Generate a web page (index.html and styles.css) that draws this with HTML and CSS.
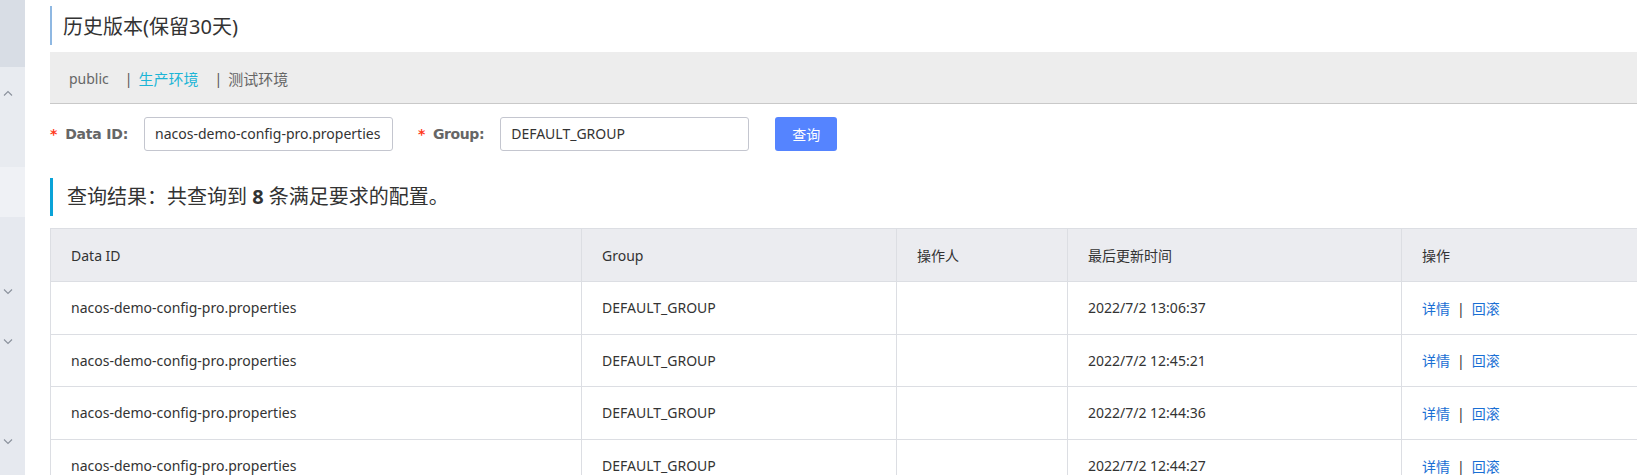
FILE: index.html
```html
<!DOCTYPE html>
<html lang="zh-CN">
<head>
<meta charset="utf-8">
<title>历史版本</title>
<link rel="stylesheet" href="styles.css">
</head>
<body>
<div class="layout">
  <aside class="sidebar">
    <div class="sb-top"></div>
    <div class="sb-group up">
      <svg class="chev" width="10" height="6" viewBox="0 0 10 6"><path d="M1 5.5 L5 1.5 L9 5.5" fill="none" stroke="#8a919c" stroke-width="1.1"/></svg>
    </div>
    <div class="sb-active"></div>
    <div class="sb-rest">
      <div class="sb-item first"><svg class="chev" width="10" height="6" viewBox="0 0 10 6"><path d="M1 0.5 L5 4.5 L9 0.5" fill="none" stroke="#8a919c" stroke-width="1.1"/></svg></div>
      <div class="sb-item second"><svg class="chev" width="10" height="6" viewBox="0 0 10 6"><path d="M1 0.5 L5 4.5 L9 0.5" fill="none" stroke="#8a919c" stroke-width="1.1"/></svg></div>
      <div class="sb-item third"><svg class="chev" width="10" height="6" viewBox="0 0 10 6"><path d="M1 0.5 L5 4.5 L9 0.5" fill="none" stroke="#8a919c" stroke-width="1.1"/></svg></div>
    </div>
  </aside>
  <main class="main">
    <h1 class="page-title">历史版本(保留30天)</h1>
    <div class="ns-bar">
      <span class="ns-item">public</span>
      <span class="ns-sep">|</span>
      <span class="ns-item active">生产环境</span>
      <span class="ns-sep">|</span>
      <span class="ns-item">测试环境</span>
    </div>
    <form class="search">
      <label class="field-label"><span class="req">*</span>Data ID:</label>
      <div class="input id-input">nacos-demo-config-pro.properties</div>
      <label class="field-label group-label"><span class="req">*</span>Group:</label>
      <div class="input group-input">DEFAULT_GROUP</div>
      <button type="button" class="btn">查询</button>
    </form>
    <h2 class="result-title">查询结果：共查询到 <b>8</b> 条满足要求的配置。</h2>
    <table class="grid">
      <colgroup>
        <col class="c1"><col class="c2"><col class="c3"><col class="c4"><col class="c5">
      </colgroup>
      <thead>
        <tr><th>Data ID</th><th>Group</th><th>操作人</th><th>最后更新时间</th><th>操作</th></tr>
      </thead>
      <tbody>
        <tr><td>nacos-demo-config-pro.properties</td><td>DEFAULT_GROUP</td><td></td><td>2022/7/2 13:06:37</td><td><a class="lnk">详情</a><span class="bar">|</span><a class="lnk">回滚</a></td></tr>
        <tr><td>nacos-demo-config-pro.properties</td><td>DEFAULT_GROUP</td><td></td><td>2022/7/2 12:45:21</td><td><a class="lnk">详情</a><span class="bar">|</span><a class="lnk">回滚</a></td></tr>
        <tr><td>nacos-demo-config-pro.properties</td><td>DEFAULT_GROUP</td><td></td><td>2022/7/2 12:44:36</td><td><a class="lnk">详情</a><span class="bar">|</span><a class="lnk">回滚</a></td></tr>
        <tr><td>nacos-demo-config-pro.properties</td><td>DEFAULT_GROUP</td><td></td><td>2022/7/2 12:44:27</td><td><a class="lnk">详情</a><span class="bar">|</span><a class="lnk">回滚</a></td></tr>
      </tbody>
    </table>
  </main>
</div>
</body>
</html>
```

FILE: styles.css
```css
* { box-sizing: border-box; }
html, body { margin: 0; padding: 0; }
body {
  width: 1637px;
  height: 475px;
  overflow: hidden;
  background: #fff;
  font-family: "Noto Sans", "Noto Sans CJK SC", sans-serif;
  color: #333;
}
.layout { display: flex; height: 475px; }
.sidebar {
  width: 25px;
  flex: none;
  display: flex;
  flex-direction: column;
  background: #e6e9ef;
}
.sb-top { height: 67px; background: #d8dde5; }
.sb-group { height: 100px; background: #e8ebf0; position: relative; }
.sb-group .chev { position: absolute; left: 3px; top: 23px; }
.sb-active { height: 50px; background: #eff1f5; }
.sb-rest { flex: 1; position: relative; background: #e6e9ef; }
.sb-item { position: absolute; left: 3px; }
.sb-item.first { top: 72px; }
.sb-item.second { top: 122px; }
.sb-item.third { top: 222px; }
.chev { display: block; }

.main { flex: 1; padding-left: 25px; min-width: 0; }
.page-title {
  margin: 6px 0 0;
  height: 39px;
  border-left: 2px solid #8fb8e2;
  padding: 3px 0 0 11px;
  font-size: 20px;
  font-weight: normal;
  line-height: 36px;
  color: #333;
}
.ns-bar {
  margin-top: 7px;
  height: 52px;
  background: #ededed;
  border-bottom: 1px solid #c9c9c9;
  display: flex;
  align-items: center;
  padding: 2px 0 0 19px;
  font-size: 14px;
  color: #666;
}
.ns-item { line-height: 20px; }
.ns-item.active, .ns-item:last-child { font-size: 15px; }
.ns-sep { color: #555; margin: 0 6px 0 16px; }
.ns-item.active { color: #1cb5d6; }

.search {
  display: flex;
  align-items: center;
  margin-top: 13px;
  height: 34px;
}
.field-label {
  font-family: "DejaVu Sans", sans-serif;
  font-size: 14px;
  font-weight: bold;
  color: #666;
  white-space: nowrap;
  margin-right: 16px;
  letter-spacing: -0.2px;
}
.req {
  color: #ff3a1d;
  font-weight: bold;
  margin-right: 8px;
}
.group-label { margin-left: 25px; margin-right: 16px; letter-spacing: -0.4px; }
.input {
  height: 34px;
  border: 1px solid #c4c6cf;
  border-radius: 3px;
  padding: 0 10px;
  font-size: 14px;
  line-height: 32px;
  color: #333;
  white-space: nowrap;
  overflow: hidden;
}
.id-input { width: 249px; }
.group-input { width: 249px; }
.btn {
  margin-left: 26px;
  width: 62px;
  height: 34px;
  border: 0;
  border-radius: 3px;
  background: #5584ff;
  color: #fff;
  font-family: "Noto Sans CJK SC", sans-serif;
  font-size: 14px;
  padding: 0;
}
.result-title {
  margin: 27px 0 0;
  height: 38px;
  border-left: 3px solid #0aa3d8;
  padding-left: 14px;
  font-size: 20px;
  font-weight: normal;
  line-height: 38px;
  color: #333;
}
.result-title b { font-weight: bold; }

.grid {
  margin-top: 12px;
  width: 1587px;
  table-layout: fixed;
  border-collapse: collapse;
  font-size: 14px;
}
.c1 { width: 531px; }
.c2 { width: 315px; }
.c3 { width: 171px; }
.c4 { width: 334px; }
.c5 { width: 236px; }
.grid th, .grid td {
  border: 1px solid #dcdee3;
  text-align: left;
  padding: 0 20px;
  white-space: nowrap;
  color: #333;
}
.grid th {
  background: #ebecf0;
  font-weight: normal;
  height: 53px;
}
.grid td { height: 52.6px; }
.grid tr > :last-child { border-right: 0; }
.lnk { color: #1a6fd4; }
.bar { color: #333; margin: 0 7px; }
```
